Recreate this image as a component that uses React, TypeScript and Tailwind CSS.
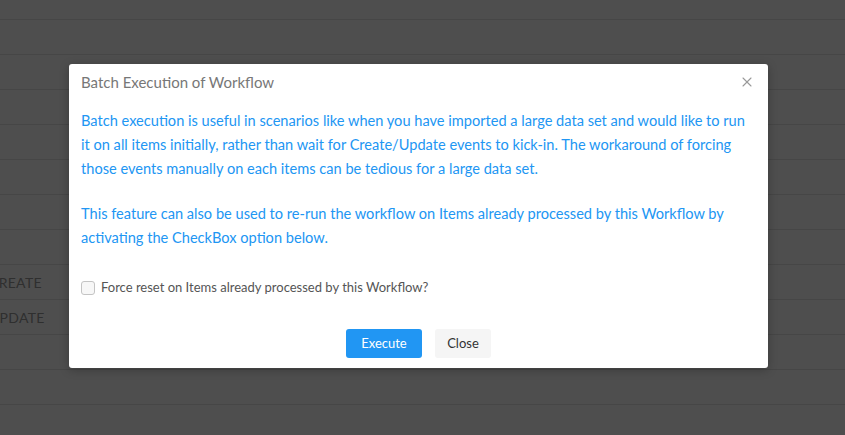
import { X } from 'lucide-react';

const rows = ['', 's', '', '', '', '', '', 'CREATE', 'UPDATE', '', '', ''];

function BackgroundTable() {
  return (
    <div className="flex flex-col">
      <div className="h-[20px] border-b border-[#464646]" />
      {rows.map((label, i) => (
        <div key={i} className="h-[35px] border-b border-[#464646] flex items-center">
          {label && (
            <span className="-ml-[11px] text-[14px] text-[#2f2f2f] tracking-[0.3px]">{label}</span>
          )}
        </div>
      ))}
    </div>
  );
}

function BatchModal() {
  return (
    <div className="absolute left-[69px] top-[64px] w-[699px] h-[304px] bg-white rounded-[3px] shadow-[0_2px_10px_rgba(0,0,0,0.25)] flex flex-col px-[12px]">
      <div className="flex items-center justify-between h-[34px] pt-[2px]">
        <span className="text-[15px] text-[#777777]">Batch Execution of Workflow</span>
        <X className="w-[16px] h-[16px] text-[#999999] mr-[1px]" strokeWidth={1.6} />
      </div>
      <div className="pt-[11px] text-[14.6px] leading-[24px] text-[#2196f3] whitespace-nowrap">
        <p>
          Batch execution is useful in scenarios like when you have imported a large data set and would like to run
          <br />
          it on all items initially, rather than wait for Create/Update events to kick-in. The workaround of forcing
          <br />
          those events manually on each items can be tedious for a large data set.
        </p>
        <p className="mt-[21px]">
          This feature can also be used to re-run the workflow on Items already processed by this Workflow by
          <br />
          activating the CheckBox option below.
        </p>
      </div>
      <label className="flex items-center gap-[6px] mt-[30px] h-[16px]">
        <span className="w-[14px] h-[14px] rounded-[3px] border border-[#c4c4c4] bg-[#f7f7f7]" />
        <span className="text-[13px] text-[#555555]">Force reset on Items already processed by this Workflow?</span>
      </label>
      <div className="flex justify-center gap-[13px] mt-[33px]">
        <button className="w-[76px] h-[29px] rounded-[3px] bg-[#2196f3] text-white text-[13px]">Execute</button>
        <button className="w-[56px] h-[29px] rounded-[3px] bg-[#f5f5f5] text-[#333333] text-[13px]">Close</button>
      </div>
    </div>
  );
}

export default function App() {
  return (
    <div
      className="relative w-[845px] h-[435px] overflow-hidden bg-[#4e4e4e]"
      style={{ fontFamily: 'Lato, "Noto Sans", sans-serif' }}
    >
      <BackgroundTable />
      <BatchModal />
    </div>
  );
}
